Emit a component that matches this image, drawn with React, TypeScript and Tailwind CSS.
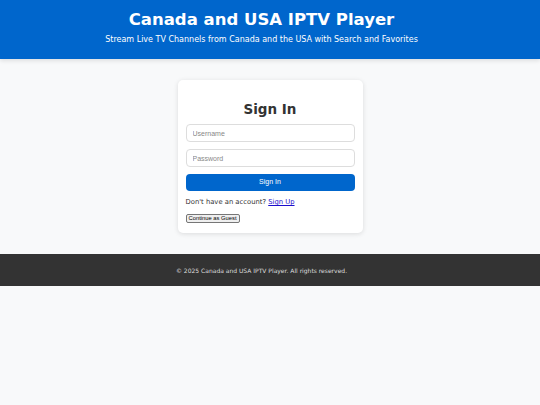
export default function App() {
  return (
    <div className="min-h-[405px] bg-[#f8f9fa] font-['DejaVu_Sans',sans-serif] text-[#333]">
      <header className="flex h-[59px] flex-col items-center bg-[#0066cc] pt-[9px] pr-[17px] text-white shadow-[0_2px_4px_rgba(0,0,0,0.1)]">
        <h1 className="text-[16.5px] font-bold leading-[22px]">Canada and USA IPTV Player</h1>
        <p className="mt-[3px] text-[8px] leading-[11px]">
          Stream Live TV Channels from Canada and the USA with Search and Favorites
        </p>
      </header>

      <main className="flex justify-center pt-[21px] pb-[21px]">
        <div className="w-[185px] rounded-[5px] bg-white px-[8px] pt-[20px] pb-[10px] shadow-[0_1px_5px_rgba(0,0,0,0.12)]">
          <h2 className="text-center text-[13.5px] font-bold leading-[18px] text-[#333]">Sign In</h2>
          <div className="mt-[6px] flex flex-col gap-[7px]">
            <input
              placeholder="Username"
              className="h-[18px] w-full rounded-[4px] border border-[#ddd] px-[6px] font-['Liberation_Sans',sans-serif] text-[7px] outline-none placeholder:text-[#888]"
            />
            <input
              placeholder="Password"
              type="password"
              className="h-[18px] w-full rounded-[4px] border border-[#ddd] px-[6px] font-['Liberation_Sans',sans-serif] text-[7px] outline-none placeholder:text-[#888]"
            />
            <button className="h-[17px] w-full rounded-[4px] bg-[#0066cc] font-['Liberation_Sans',sans-serif] text-[7px] text-white">
              Sign In
            </button>
          </div>
          <p className="mt-[6px] text-[6.8px] leading-[10px] text-[#333]">
            Don't have an account?{' '}
            <a href="#" className="text-[#1a0dcc] underline">
              Sign Up
            </a>
          </p>
          <button className="mt-[7px] block h-[9px] rounded-[2px] border border-[#767676] bg-[#efefef] px-[2px] font-['Liberation_Sans',sans-serif] text-[5.8px] leading-[7px] text-black">
            Continue as Guest
          </button>
        </div>
      </main>

      <footer className="flex h-[32px] items-center justify-center bg-[#333] pr-[17px] text-[6px] text-[#ddd]">
        © 2025 Canada and USA IPTV Player. All rights reserved.
      </footer>
    </div>
  );
}
